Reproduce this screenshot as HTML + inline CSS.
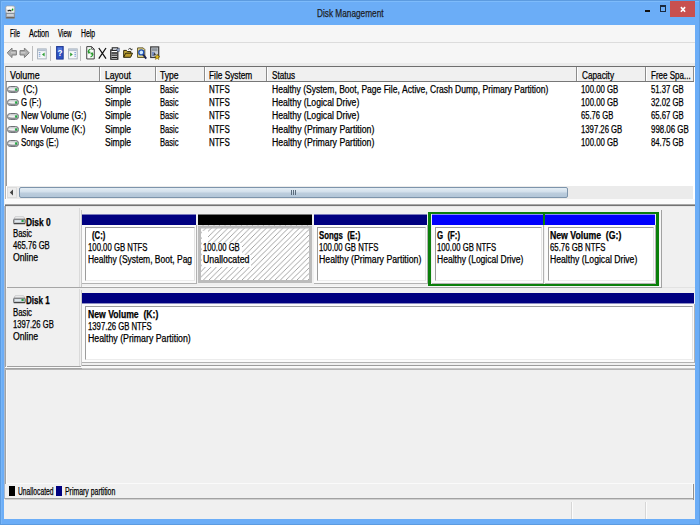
<!DOCTYPE html>
<html><head><meta charset="utf-8"><title>Disk Management</title>
<style>
html,body{margin:0;padding:0;}
body{width:700px;height:525px;overflow:hidden;position:relative;background:#6badf7;font-family:"Liberation Sans",sans-serif;font-size:10px;}
div,span,svg{position:absolute;box-sizing:border-box;}
.t{white-space:nowrap;line-height:14px;height:14px;transform-origin:0 50%;-webkit-text-stroke:0.25px currentColor;}
#edgeL{left:0;top:0;width:1px;height:525px;background:#5c9be0;}
#edgeT{left:0;top:0;width:700px;height:1px;background:#5c9be0;}
#hiT{left:1px;top:1px;width:698px;height:1px;background:#7dbbfb;}
#hiL{left:1px;top:1px;width:1px;height:523px;background:#78b6f8;}
#edgeR{left:699px;top:0;width:1px;height:525px;background:#5c9be0;}
#edgeB{left:0;top:524px;width:700px;height:1px;background:#5c9be0;}
#client{left:4px;top:25px;width:691px;height:494px;background:#f0f0f0;}
#menubar{left:4px;top:25px;width:691px;height:17px;background:#f6f6f6;}
#menuline{left:4px;top:42px;width:691px;height:1px;background:#dcdcdc;}
#toolbar{left:4px;top:43px;width:691px;height:20px;background:#f6f6f6;}
#tbband{left:4px;top:63px;width:691px;height:3px;background:#ebebeb;}
.sep{width:1px;height:15px;top:46px;background:#bdbdbd;}
#close{left:670px;top:1px;width:25px;height:16px;background:#c8504f;}
#list{left:5px;top:66px;width:690px;height:138px;background:#fff;border-top:1px solid #6e6e6e;border-left:1px solid #b4b4b4;}
#listL{left:6px;top:82px;width:1px;height:104px;background:#9a9a9a;}
#lhead{left:6px;top:67px;width:688px;height:15px;background:#f0f0f0;border-bottom:1px solid #777;}
.hsep{top:67px;width:2px;height:14px;border-left:1px solid #8c8c8c;background:#fff;}
.drv{width:12px;height:7px;left:7px;}
#hs{left:7px;top:186px;width:686px;height:13px;background:#ebebeb;}
#hsthumb{left:19px;top:187px;width:549px;height:11px;border:1px solid #7d94ab;border-radius:2px;background:linear-gradient(#e4edf5,#d2dfeb 45%,#bccddd 55%,#b3c6d8);}
#split{left:5px;top:205px;width:690px;height:1px;background:#727272;border:0}
.dpanel{left:6px;width:74px;background:#f0f0f0;border-right:1px solid #dadada;}
.gview{left:5px;width:690px;background:#f0f0f0;}
.bar{height:11px;}
.navy{background:#000080;border-top:1px solid #7c7cbc;}
.blue{background:#0000fc;border-top:1px solid #8a8af8;}
.black{background:#000;border-top:1px solid #7a7a7a;}
.pbox{background:#fbfbfb;border-right:1px solid #b2b2b2;border-bottom:1px solid #b2b2b2;}
.pin{border:1px solid #9c9c9c;border-right-color:#e4e4e4;border-bottom-color:#ececec;background:#fff;}
.hline{height:1px;left:5px;width:690px;}

</style></head><body>
<div id="client"></div>
<div id="edgeL"></div><div id="edgeT"></div><div id="edgeR"></div><div id="edgeB"></div><div id="hiT"></div><div id="hiL"></div>
<div id="menubar"></div><div id="menuline"></div><div id="toolbar"></div><div id="tbband"></div>
<div id="close"></div>
<svg style="left:676px;top:4px" width="14" height="11" viewBox="0 0 14 11"><path d="M4.9 3.1 L9.1 7.7 M9.1 3.1 L4.9 7.7" stroke="#fff" stroke-width="1.6" fill="none"/></svg>
<div style="left:645px;top:10px;width:5px;height:2px;background:#111"></div>
<div style="left:660px;top:5px;width:6px;height:7px;border:1px solid #1a2a40;border-top-width:2px"></div>
<!-- app icon -->
<svg style="left:5px;top:5px" width="11" height="14" viewBox="0 0 11 14">
<rect x="0.8" y="1" width="9" height="7.2" rx="1.4" fill="#e9eaec" stroke="#9aa0a8" stroke-width=".9"/>
<rect x="1.6" y="1.6" width="6" height="2.4" fill="#fbfbfb"/>
<path d="M2.6 6 Q4.6 4.6 6.4 6" stroke="#222" stroke-width="1.2" fill="none"/>
<rect x="6.8" y="3.6" width="1.5" height="2.2" rx=".7" fill="#14a014"/>
<rect x="1" y="8.4" width="8.6" height="4.8" fill="#aab0b8" stroke="#80858c" stroke-width=".7"/>
<rect x="2" y="9.4" width="6.6" height="1.2" fill="#e3e7ec"/>
<rect x="1.2" y="12" width="8.2" height="1.2" fill="#6f655c"/>
</svg>

<!-- toolbar icons -->
<svg style="left:6px;top:47px" width="26" height="13" viewBox="0 0 26 13">
<path d="M1.2 5.8 L6 1 L6 3.6 L10.4 3.6 L10.4 8 L6 8 L6 10.6 Z" fill="#aeaeae" stroke="#7e7e7e" stroke-width="1"/>
<path d="M5 5.8 H9.6" stroke="#d6d6d6" stroke-width="1"/>
<path d="M23.2 5.8 L18.4 1 L18.4 3.6 L14 3.6 L14 8 L18.4 8 L18.4 10.6 Z" fill="#aeaeae" stroke="#7e7e7e" stroke-width="1"/>
<path d="M14.8 5.8 H19.4" stroke="#d6d6d6" stroke-width="1"/>
</svg>
<div class="sep" style="left:32px"></div>
<svg style="left:37px;top:48px" width="10" height="12" viewBox="0 0 10 12">
<rect x="0.6" y="0.9" width="8.6" height="10" fill="#f6f8fa" stroke="#a2acb8" stroke-width=".9"/>
<rect x="1" y="1.3" width="7.8" height="1.8" fill="#b4c0d0"/>
<path d="M1.8 4.6 H3.4 M1.8 6.4 H3.4 M1.8 8.2 H3.4" stroke="#7f9ed0" stroke-width="1"/>
<path d="M7.6 4.6 L5 6.6 L7.6 8.6 Z" fill="#2f9e35"/>
</svg>
<div class="sep" style="left:50px"></div>
<svg style="left:55.5px;top:46px" width="8" height="14" viewBox="0 0 8 14">
<rect x="0.6" y="0.5" width="6.6" height="12.6" fill="#2d50c0" stroke="#1c3690" stroke-width=".9"/>
<rect x="1.6" y="1.5" width="4.6" height="5" fill="#5c84e6" opacity=".75"/>
<text x="3.9" y="10.4" font-family="Liberation Sans" font-size="9.5" font-weight="bold" fill="#fff" text-anchor="middle" transform="translate(0.6 0) scale(0.85 1)">?</text>
</svg>
<svg style="left:68px;top:48px" width="10" height="12" viewBox="0 0 10 12">
<rect x="0.6" y="0.9" width="8.6" height="10" fill="#f6f8fa" stroke="#a2acb8" stroke-width=".9"/>
<rect x="1" y="1.3" width="7.8" height="1.8" fill="#b4c0d0"/>
<path d="M6.4 4.6 H8 M6.4 6.4 H8 M6.4 8.2 H8" stroke="#7f9ed0" stroke-width="1"/>
<path d="M2.2 4.6 L4.8 6.6 L2.2 8.6 Z" fill="#2f9e35"/>
</svg>
<div class="sep" style="left:80px"></div>
<svg style="left:85.5px;top:46px" width="9" height="14" viewBox="0 0 10 16">
<path d="M0.7 0.7 H6.3 L9.3 3.7 V14.8 H0.7 Z" fill="#fbfbfb" stroke="#3a3a3a" stroke-width="1.1"/>
<path d="M6.3 0.7 V3.7 H9.3" fill="none" stroke="#3a3a3a" stroke-width=".9"/>
<path d="M5 3.5 C2.5 4 2.3 6.5 3 7.5 M2 6 L3.2 8 L4.8 6.5" fill="none" stroke="#2b9a2f" stroke-width="1.5"/>
<path d="M5 12.5 C7.5 12 7.7 9.5 7 8.5 M8 10 L6.8 8 L5.2 9.5" fill="none" stroke="#2b9a2f" stroke-width="1.5"/>
</svg>
<svg style="left:98px;top:47px" width="9" height="13" viewBox="0 0 9 13">
<path d="M0.8 1 L8 11.6 M8 1 L0.8 11.6" stroke="#111" stroke-width="1.25" fill="none"/>
</svg>
<svg style="left:110px;top:47px" width="10" height="13" viewBox="0 0 10 13">
<rect x="0.8" y="3" width="7" height="9.2" fill="#fff" stroke="#1a1a1a" stroke-width="1.2"/>
<path d="M1.5 6 H7 M1.5 8.2 H7 M1.5 10.4 H7" stroke="#1a1a1a" stroke-width="1.3"/>
<rect x="2.2" y="0.8" width="5.6" height="2.6" fill="#dfe3ea" stroke="#1a1a1a" stroke-width="1"/>
<path d="M6.5 2.5 L9.3 1 L9.3 4.4 L7.6 4.6 Z" fill="#9fb0d0" stroke="#44506a" stroke-width=".6"/>
</svg>
<svg style="left:123px;top:47px" width="10" height="12" viewBox="0 0 10 12">
<path d="M0.7 10.3 V3.4 H3.4 L4.4 4.6 H7.8 V6.4" fill="#c9ae3c" stroke="#2e2608" stroke-width="1"/>
<path d="M0.7 10.3 L2.6 6.2 H9.5 L7.6 10.3 Z" fill="#b89a2c" stroke="#2e2608" stroke-width="1"/>
<path d="M5.2 2.6 C6.4 .8 8.3 1 8.6 3 M8.6 3 L7.4 2.4 M8.6 3 L9.4 1.8" fill="none" stroke="#3a3a3a" stroke-width=".9"/>
</svg>
<svg style="left:137px;top:47px" width="10" height="13" viewBox="0 0 10 13">
<path d="M0.6 0.9 H6.2 L7.8 2.5 V10.4 H0.6 Z" fill="#f2e08a" stroke="#5c5226" stroke-width="1"/>
<circle cx="4.3" cy="5.4" r="2.5" fill="#cfeaff" stroke="#1f4fb4" stroke-width="1.4"/>
<path d="M6.2 7.6 L9.2 11.6" stroke="#1c2450" stroke-width="1.8"/>
</svg>
<svg style="left:150px;top:46px" width="10" height="14" viewBox="0 0 10 14">
<rect x="0.7" y="0.9" width="8" height="10.6" fill="#c9cdd3" stroke="#3c3c3c" stroke-width="1.2"/>
<rect x="2" y="2.2" width="5.4" height="3" fill="#8f979f"/>
<path d="M2 7 H4.4 M2 9 H4.4" stroke="#2a50b0" stroke-width="1.2"/>
<path d="M4.5 6.2 L6 9 L3.4 9.6 Z" fill="#3a3a3a"/>
<path d="M7.2 8 L8 10 L10 10.4 L8.4 11.6 L8.8 13.6 L7.2 12.4 L5.4 13.4 L6 11.4 L4.6 10.2 L6.6 10 Z" fill="#e8c020" stroke="#6a5400" stroke-width=".5"/>
</svg>

<!-- list view -->
<div id="list"></div><div id="listL"></div><div id="lhead"></div>
<div class="hsep" style="left:99px"></div>
<div class="hsep" style="left:155px"></div>
<div class="hsep" style="left:204px"></div>
<div class="hsep" style="left:266px"></div>
<div class="hsep" style="left:576px"></div>
<div class="hsep" style="left:645px"></div>
<div class="hsep" style="left:693px"></div>
<svg class="drv" style="top:86px" width="12" height="7" viewBox="0 0 12 7"><rect x="0.5" y="0.5" width="11" height="6" rx="2.8" fill="#cfd1d3" stroke="#6f7276"/><path d="M1.4 4.6 Q6 6.6 10.6 4.6" stroke="#8a8d91" stroke-width="1.2" fill="none"/><rect x="1.8" y="2.6" width="6" height="1.5" rx=".7" fill="#f2f2f2"/><rect x="8.1" y="2.4" width="2.2" height="2.2" fill="#1fa83f"/></svg>
<svg class="drv" style="top:99px" width="12" height="7" viewBox="0 0 12 7"><rect x="0.5" y="0.5" width="11" height="6" rx="2.8" fill="#cfd1d3" stroke="#6f7276"/><path d="M1.4 4.6 Q6 6.6 10.6 4.6" stroke="#8a8d91" stroke-width="1.2" fill="none"/><rect x="1.8" y="2.6" width="6" height="1.5" rx=".7" fill="#f2f2f2"/><rect x="8.1" y="2.4" width="2.2" height="2.2" fill="#1fa83f"/></svg>
<svg class="drv" style="top:113px" width="12" height="7" viewBox="0 0 12 7"><rect x="0.5" y="0.5" width="11" height="6" rx="2.8" fill="#cfd1d3" stroke="#6f7276"/><path d="M1.4 4.6 Q6 6.6 10.6 4.6" stroke="#8a8d91" stroke-width="1.2" fill="none"/><rect x="1.8" y="2.6" width="6" height="1.5" rx=".7" fill="#f2f2f2"/><rect x="8.1" y="2.4" width="2.2" height="2.2" fill="#1fa83f"/></svg>
<svg class="drv" style="top:126px" width="12" height="7" viewBox="0 0 12 7"><rect x="0.5" y="0.5" width="11" height="6" rx="2.8" fill="#cfd1d3" stroke="#6f7276"/><path d="M1.4 4.6 Q6 6.6 10.6 4.6" stroke="#8a8d91" stroke-width="1.2" fill="none"/><rect x="1.8" y="2.6" width="6" height="1.5" rx=".7" fill="#f2f2f2"/><rect x="8.1" y="2.4" width="2.2" height="2.2" fill="#1fa83f"/></svg>
<svg class="drv" style="top:140px" width="12" height="7" viewBox="0 0 12 7"><rect x="0.5" y="0.5" width="11" height="6" rx="2.8" fill="#cfd1d3" stroke="#6f7276"/><path d="M1.4 4.6 Q6 6.6 10.6 4.6" stroke="#8a8d91" stroke-width="1.2" fill="none"/><rect x="1.8" y="2.6" width="6" height="1.5" rx=".7" fill="#f2f2f2"/><rect x="8.1" y="2.4" width="2.2" height="2.2" fill="#1fa83f"/></svg>
<div id="hs"></div>
<div style="left:7px;top:187px;width:10px;height:11px;background:#ececec;border:1px solid #dcdcdc"></div>
<svg style="left:9px;top:189px" width="5" height="7" viewBox="0 0 5 7"><path d="M4 0.5 L0.8 3.5 L4 6.5 Z" fill="#444"/></svg>
<div id="hsthumb"></div>
<div style="left:291px;top:190px;width:1px;height:5px;background:#5a6b7c"></div><div style="left:293px;top:190px;width:1px;height:5px;background:#5a6b7c"></div><div style="left:295px;top:190px;width:1px;height:5px;background:#5a6b7c"></div>
<div style="left:5px;top:199px;width:690px;height:5px;background:#fbfbfb"></div>
<div id="split"></div>
<div style="left:5px;top:204px;width:690px;height:1px;background:#a8a8a8"></div>
<div style="left:5px;top:206px;width:690px;height:1px;background:#e6e6e6"></div>
<div class="gview" style="top:207px;height:276px"></div>
<div class="dpanel" style="top:208px;height:79px"></div>
<div class="hline" style="top:287px;background:#a6a6a6;width:657px"></div>
<div class="hline" style="top:287px;left:662px;background:#e2e2e2;width:33px"></div>
<div style="left:4px;top:206px;width:1px;height:293px;background:#a9b9cf"></div>
<div style="left:5px;top:206px;width:1px;height:293px;background:#a2a2a2"></div>
<div style="left:6px;top:207px;width:1px;height:292px;background:#fafafa"></div>
<div class="dpanel" style="top:289px;height:77px"></div>
<div style="left:81px;top:210px;width:1px;height:77px;background:#c8c8c8"></div>
<div style="left:81px;top:290px;width:1px;height:76px;background:#c8c8c8"></div>
<div class="hline" style="top:366px;left:7px;width:74px;background:#a0a0a0"></div>
<div class="hline" style="top:365px;left:82px;width:613px;background:#9c9c9c"></div>
<div class="hline" style="top:366px;left:82px;width:613px;background:#fafafa"></div>
<div class="hline" style="top:367px;background:#fafafa"></div>
<div class="hline" style="top:368px;background:#a4a4a4;width:77px"></div>
<div class="hline" style="top:368px;left:82px;width:613px;background:#c8c8c8"></div>
<div class="hline" style="top:369px;background:#b4b4b4"></div>
<svg style="left:13px;top:216px" width="13" height="9" viewBox="0 0 13 9"><path d="M2.2 0.8 H10.6 L12 3.2 H0.8 Z" fill="#f6f6f6" stroke="#b4b6b8" stroke-width=".7"/><rect x="0.7" y="3.2" width="11.5" height="4.4" rx=".8" fill="#c3c7cb" stroke="#5a5c5e" stroke-width=".9"/><rect x="2" y="4.3" width="6" height="1.6" fill="#e2ebf2"/><rect x="8.6" y="4" width="2" height="2" fill="#1fa83f"/><path d="M0.7 7.7 H12.2" stroke="#333" stroke-width=".9"/></svg>
<svg style="left:13px;top:295px" width="13" height="9" viewBox="0 0 13 9"><path d="M2.2 0.8 H10.6 L12 3.2 H0.8 Z" fill="#f6f6f6" stroke="#b4b6b8" stroke-width=".7"/><rect x="0.7" y="3.2" width="11.5" height="4.4" rx=".8" fill="#c3c7cb" stroke="#5a5c5e" stroke-width=".9"/><rect x="2" y="4.3" width="6" height="1.6" fill="#e2ebf2"/><rect x="8.6" y="4" width="2" height="2" fill="#1fa83f"/><path d="M0.7 7.7 H12.2" stroke="#333" stroke-width=".9"/></svg>
<div class="bar navy" style="left:82px;top:214px;width:114px"></div>
<div class="pbox" style="left:82px;top:225px;width:115px;height:59px"></div>
<div class="pin" style="left:85px;top:227px;width:110px;height:54px"></div>
<div class="bar black" style="left:198px;top:214px;width:114px"></div>
<div style="left:198px;top:225px;width:114px;height:58px;background:#fff"></div>
<svg style="left:198px;top:225px" width="114" height="58"><defs><pattern id="hp" width="5.5" height="5.5" patternUnits="userSpaceOnUse"><path d="M-1 6.5 L6.5 -1 M-1 1 L1 -1 M4.5 6.5 L6.5 4.5" stroke="#989898" stroke-width="0.9"/></pattern></defs><rect width="114" height="58" fill="url(#hp)"/><rect x="1.5" y="2" width="111" height="54.5" fill="none" stroke="#bcbcbc" stroke-width="3"/></svg>
<div class="bar navy" style="left:314px;top:214px;width:113px"></div>
<div class="pbox" style="left:314px;top:225px;width:114px;height:59px"></div>
<div class="pin" style="left:317px;top:227px;width:109px;height:54px"></div>
<div style="left:428px;top:212px;width:231px;height:74px;border:3px solid #0b7f0b;border-top-width:2px;border-bottom-width:2px;background:#f0f0f0"></div>
<div style="left:659px;top:210px;width:2px;height:77px;background:#f6f6f6"></div>
<div style="left:661px;top:210px;width:1px;height:78px;background:#a2a2a2"></div>
<div style="left:82px;top:286px;width:579px;height:1px;background:#f8f8f8"></div>
<div class="bar blue" style="left:432px;top:214px;width:111px"></div>
<div class="pbox" style="left:432px;top:225px;width:112px;height:59px"></div>
<div class="pin" style="left:435px;top:227px;width:107px;height:54px"></div>
<div style="left:543px;top:214px;width:2px;height:11px;background:#0b7f0b"></div>
<div class="bar blue" style="left:545px;top:214px;width:110px"></div>
<div class="pbox" style="left:545px;top:225px;width:111px;height:59px"></div>
<div class="pin" style="left:548px;top:227px;width:106px;height:54px"></div>
<div class="bar navy" style="left:82px;top:293px;width:612px;border-top:0;border-bottom:1px solid #8c8cc4"></div>
<div class="pbox" style="left:82px;top:304px;width:613px;height:59px"></div>
<div class="pin" style="left:85px;top:306px;width:608px;height:54px"></div>
<div style="left:202px;top:231px;width:6px;height:12px;background:#fff"></div>
<div style="left:202px;top:243px;width:40px;height:12px;background:#fff"></div>
<div style="left:202px;top:255px;width:49px;height:12px;background:#fff"></div>
<div class="hline" style="top:483px;background:#fafafa;left:6px;width:687px"></div>
<div style="left:5px;top:484px;width:690px;height:14px;background:#f0f0f0"></div>
<div style="left:9px;top:486px;width:6px;height:10px;background:#000"></div>
<div style="left:56px;top:486px;width:6px;height:10px;background:#000080"></div>
<div class="hline" style="top:498px;background:#a2a2a2;width:689px"></div>
<div class="hline" style="top:499px;background:#d0d0d0;width:689px"></div>
<div style="left:693px;top:484px;width:1px;height:16px;background:#8e8e8e"></div>
<div style="left:692px;top:484px;width:1px;height:14px;background:#fafafa"></div>
<div style="left:4px;top:500px;width:691px;height:19px;background:#f0f0f0"></div>
<div style="left:571px;top:502px;width:1px;height:17px;background:#d6d6d6"></div><div style="left:572px;top:502px;width:1px;height:17px;background:#fcfcfc"></div>
<div style="left:645px;top:502px;width:1px;height:17px;background:#d6d6d6"></div><div style="left:646px;top:502px;width:1px;height:17px;background:#fcfcfc"></div>

<span class="t" id="t0" style="left:316.50px;top:6px;font-size:11px;color:#1c1c24;transform:scaleX(0.7506);">Disk&nbsp;Management</span>
<span class="t" id="t1" style="left:10.00px;top:27px;font-size:10px;color:#000;transform:scaleX(0.6223);">File</span>
<span class="t" id="t2" style="left:29.30px;top:27px;font-size:10px;color:#000;transform:scaleX(0.7234);">Action</span>
<span class="t" id="t3" style="left:58.00px;top:27px;font-size:10px;color:#000;transform:scaleX(0.6286);">View</span>
<span class="t" id="t4" style="left:80.70px;top:27px;font-size:10px;color:#000;transform:scaleX(0.6808);">Help</span>
<span class="t" id="t5" style="left:10.00px;top:69px;font-size:10px;color:#000;transform:scaleX(0.8878);">Volume</span>
<span class="t" id="t6" style="left:105.00px;top:69px;font-size:10px;color:#000;transform:scaleX(0.8596);">Layout</span>
<span class="t" id="t7" style="left:160.00px;top:69px;font-size:10px;color:#000;transform:scaleX(0.8590);">Type</span>
<span class="t" id="t8" style="left:209.00px;top:69px;font-size:10px;color:#000;transform:scaleX(0.8285);">File&nbsp;System</span>
<span class="t" id="t9" style="left:272.00px;top:69px;font-size:10px;color:#000;transform:scaleX(0.8113);">Status</span>
<span class="t" id="t10" style="left:582.00px;top:69px;font-size:10px;color:#000;transform:scaleX(0.8225);">Capacity</span>
<span class="t" id="t11" style="left:651.00px;top:69px;font-size:10px;color:#000;transform:scaleX(0.8010);">Free&nbsp;Spa...</span>
<span class="t" id="t12" style="left:23.00px;top:83px;font-size:10px;color:#000;transform:scaleX(0.8879);">(C:)</span>
<span class="t" id="t13" style="left:104.50px;top:83px;font-size:10px;color:#000;transform:scaleX(0.8547);">Simple</span>
<span class="t" id="t14" style="left:160.00px;top:83px;font-size:10px;color:#000;transform:scaleX(0.7565);">Basic</span>
<span class="t" id="t15" style="left:209.00px;top:83px;font-size:10px;color:#000;transform:scaleX(0.7943);">NTFS</span>
<span class="t" id="t16" style="left:271.50px;top:83px;font-size:10px;color:#000;transform:scaleX(0.8513);">Healthy&nbsp;(System,&nbsp;Boot,&nbsp;Page&nbsp;File,&nbsp;Active,&nbsp;Crash&nbsp;Dump,&nbsp;Primary&nbsp;Partition)</span>
<span class="t" id="t17" style="left:581.00px;top:83px;font-size:10px;color:#000;transform:scaleX(0.7789);">100.00&nbsp;GB</span>
<span class="t" id="t18" style="left:650.50px;top:83px;font-size:10px;color:#000;transform:scaleX(0.7750);">51.37&nbsp;GB</span>
<span class="t" id="t19" style="left:21.00px;top:96px;font-size:10px;color:#000;transform:scaleX(0.7760);">G&nbsp;(F:)</span>
<span class="t" id="t20" style="left:104.50px;top:96px;font-size:10px;color:#000;transform:scaleX(0.8547);">Simple</span>
<span class="t" id="t21" style="left:160.00px;top:96px;font-size:10px;color:#000;transform:scaleX(0.7565);">Basic</span>
<span class="t" id="t22" style="left:209.00px;top:96px;font-size:10px;color:#000;transform:scaleX(0.7943);">NTFS</span>
<span class="t" id="t23" style="left:271.50px;top:96px;font-size:10px;color:#000;transform:scaleX(0.8629);">Healthy&nbsp;(Logical&nbsp;Drive)</span>
<span class="t" id="t24" style="left:581.00px;top:96px;font-size:10px;color:#000;transform:scaleX(0.7789);">100.00&nbsp;GB</span>
<span class="t" id="t25" style="left:650.50px;top:96px;font-size:10px;color:#000;transform:scaleX(0.7750);">32.02&nbsp;GB</span>
<span class="t" id="t26" style="left:21.00px;top:109px;font-size:10px;color:#000;transform:scaleX(0.8575);">New&nbsp;Volume&nbsp;(G:)</span>
<span class="t" id="t27" style="left:104.50px;top:109px;font-size:10px;color:#000;transform:scaleX(0.8547);">Simple</span>
<span class="t" id="t28" style="left:160.00px;top:109px;font-size:10px;color:#000;transform:scaleX(0.7565);">Basic</span>
<span class="t" id="t29" style="left:209.00px;top:109px;font-size:10px;color:#000;transform:scaleX(0.7943);">NTFS</span>
<span class="t" id="t30" style="left:271.50px;top:109px;font-size:10px;color:#000;transform:scaleX(0.8629);">Healthy&nbsp;(Logical&nbsp;Drive)</span>
<span class="t" id="t31" style="left:581.00px;top:109px;font-size:10px;color:#000;transform:scaleX(0.7633);">65.76&nbsp;GB</span>
<span class="t" id="t32" style="left:650.50px;top:109px;font-size:10px;color:#000;transform:scaleX(0.7750);">65.67&nbsp;GB</span>
<span class="t" id="t33" style="left:21.00px;top:123px;font-size:10px;color:#000;transform:scaleX(0.8568);">New&nbsp;Volume&nbsp;(K:)</span>
<span class="t" id="t34" style="left:104.50px;top:123px;font-size:10px;color:#000;transform:scaleX(0.8547);">Simple</span>
<span class="t" id="t35" style="left:160.00px;top:123px;font-size:10px;color:#000;transform:scaleX(0.7565);">Basic</span>
<span class="t" id="t36" style="left:209.00px;top:123px;font-size:10px;color:#000;transform:scaleX(0.7943);">NTFS</span>
<span class="t" id="t37" style="left:271.50px;top:123px;font-size:10px;color:#000;transform:scaleX(0.8724);">Healthy&nbsp;(Primary&nbsp;Partition)</span>
<span class="t" id="t38" style="left:581.00px;top:123px;font-size:10px;color:#000;transform:scaleX(0.7728);">1397.26&nbsp;GB</span>
<span class="t" id="t39" style="left:650.50px;top:123px;font-size:10px;color:#000;transform:scaleX(0.7893);">998.06&nbsp;GB</span>
<span class="t" id="t40" style="left:21.00px;top:136px;font-size:10px;color:#000;transform:scaleX(0.7994);">Songs&nbsp;(E:)</span>
<span class="t" id="t41" style="left:104.50px;top:136px;font-size:10px;color:#000;transform:scaleX(0.8547);">Simple</span>
<span class="t" id="t42" style="left:160.00px;top:136px;font-size:10px;color:#000;transform:scaleX(0.7565);">Basic</span>
<span class="t" id="t43" style="left:209.00px;top:136px;font-size:10px;color:#000;transform:scaleX(0.7943);">NTFS</span>
<span class="t" id="t44" style="left:271.50px;top:136px;font-size:10px;color:#000;transform:scaleX(0.8724);">Healthy&nbsp;(Primary&nbsp;Partition)</span>
<span class="t" id="t45" style="left:581.00px;top:136px;font-size:10px;color:#000;transform:scaleX(0.7789);">100.00&nbsp;GB</span>
<span class="t" id="t46" style="left:650.50px;top:136px;font-size:10px;color:#000;transform:scaleX(0.7750);">84.75&nbsp;GB</span>
<span class="t" id="t47" style="left:26.00px;top:216px;font-size:10px;color:#000;font-weight:bold;transform:scaleX(0.8361);">Disk&nbsp;0</span>
<span class="t" id="t48" style="left:13.00px;top:227px;font-size:10px;color:#000;transform:scaleX(0.7770);">Basic</span>
<span class="t" id="t49" style="left:13.00px;top:239px;font-size:10px;color:#000;transform:scaleX(0.7686);">465.76&nbsp;GB</span>
<span class="t" id="t50" style="left:13.00px;top:251px;font-size:10px;color:#000;transform:scaleX(0.8690);">Online</span>
<span class="t" id="t51" style="left:26.00px;top:294px;font-size:10px;color:#000;font-weight:bold;transform:scaleX(0.8026);">Disk&nbsp;1</span>
<span class="t" id="t52" style="left:13.00px;top:306px;font-size:10px;color:#000;transform:scaleX(0.7770);">Basic</span>
<span class="t" id="t53" style="left:13.00px;top:318px;font-size:10px;color:#000;transform:scaleX(0.7634);">1397.26&nbsp;GB</span>
<span class="t" id="t54" style="left:13.00px;top:330px;font-size:10px;color:#000;transform:scaleX(0.8690);">Online</span>
<span class="t" id="t55" style="left:92.00px;top:229px;font-size:10px;color:#000;font-weight:bold;transform:scaleX(0.7701);">(C:)</span>
<span class="t" id="t56" style="left:88.00px;top:241px;font-size:10px;color:#000;transform:scaleX(0.7763);">100.00&nbsp;GB&nbsp;NTFS</span>
<span class="t" id="t57" style="left:88.00px;top:253px;font-size:10px;color:#000;transform:scaleX(0.8473);">Healthy&nbsp;(System,&nbsp;Boot,&nbsp;Pag</span>
<span class="t" id="t58" style="left:203.00px;top:241px;font-size:10px;color:#000;transform:scaleX(0.7686);">100.00&nbsp;GB</span>
<span class="t" id="t59" style="left:203.00px;top:253px;font-size:10px;color:#000;transform:scaleX(0.8804);">Unallocated</span>
<span class="t" id="t60" style="left:319.00px;top:229px;font-size:10px;color:#000;font-weight:bold;transform:scaleX(0.7818);">Songs&nbsp;&nbsp;(E:)</span>
<span class="t" id="t61" style="left:319.00px;top:241px;font-size:10px;color:#000;transform:scaleX(0.7737);">100.00&nbsp;GB&nbsp;NTFS</span>
<span class="t" id="t62" style="left:319.00px;top:253px;font-size:10px;color:#000;transform:scaleX(0.8724);">Healthy&nbsp;(Primary&nbsp;Partition)</span>
<span class="t" id="t63" style="left:437.40px;top:229px;font-size:10px;color:#000;font-weight:bold;transform:scaleX(0.7834);">G&nbsp;&nbsp;(F:)</span>
<span class="t" id="t64" style="left:437.40px;top:241px;font-size:10px;color:#000;transform:scaleX(0.7711);">100.00&nbsp;GB&nbsp;NTFS</span>
<span class="t" id="t65" style="left:437.40px;top:253px;font-size:10px;color:#000;transform:scaleX(0.8530);">Healthy&nbsp;(Logical&nbsp;Drive)</span>
<span class="t" id="t66" style="left:550.00px;top:229px;font-size:10px;color:#000;font-weight:bold;transform:scaleX(0.8689);">New&nbsp;Volume&nbsp;&nbsp;(G:)</span>
<span class="t" id="t67" style="left:550.00px;top:241px;font-size:10px;color:#000;transform:scaleX(0.7780);">65.76&nbsp;GB&nbsp;NTFS</span>
<span class="t" id="t68" style="left:550.00px;top:253px;font-size:10px;color:#000;transform:scaleX(0.8629);">Healthy&nbsp;(Logical&nbsp;Drive)</span>
<span class="t" id="t69" style="left:88.00px;top:308px;font-size:10px;color:#000;font-weight:bold;transform:scaleX(0.8626);">New&nbsp;Volume&nbsp;&nbsp;(K:)</span>
<span class="t" id="t70" style="left:88.00px;top:320px;font-size:10px;color:#000;transform:scaleX(0.7749);">1397.26&nbsp;GB&nbsp;NTFS</span>
<span class="t" id="t71" style="left:88.00px;top:332px;font-size:10px;color:#000;transform:scaleX(0.8767);">Healthy&nbsp;(Primary&nbsp;Partition)</span>
<span class="t" id="t72" style="left:17.50px;top:485px;font-size:10px;color:#000;transform:scaleX(0.6718);">Unallocated</span>
<span class="t" id="t73" style="left:64.70px;top:485px;font-size:10px;color:#000;transform:scaleX(0.6908);">Primary&nbsp;partition</span>
</body></html>
